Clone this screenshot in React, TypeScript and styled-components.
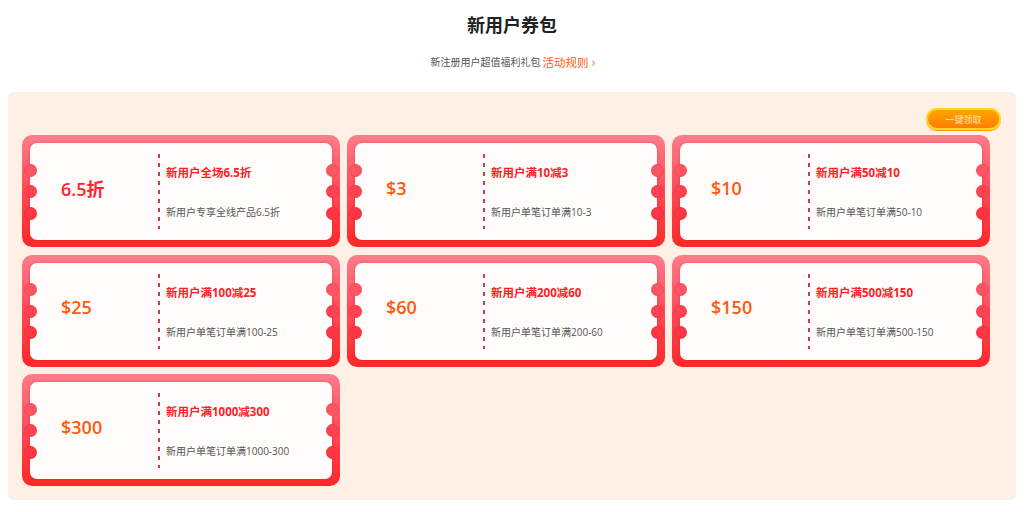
import React from "react";
import styled, { createGlobalStyle } from "styled-components";

const coupons = [
  { value: "6.5折", discount: true, title: "新用户全场6.5折", desc: "新用户专享全线产品6.5折" },
  { value: "$3", title: "新用户满10减3", desc: "新用户单笔订单满10-3" },
  { value: "$10", title: "新用户满50减10", desc: "新用户单笔订单满50-10" },
  { value: "$25", title: "新用户满100减25", desc: "新用户单笔订单满100-25" },
  { value: "$60", title: "新用户满200减60", desc: "新用户单笔订单满200-60" },
  { value: "$150", title: "新用户满500减150", desc: "新用户单笔订单满500-150" },
  { value: "$300", title: "新用户满1000减300", desc: "新用户单笔订单满1000-300" },
];

const notches = [
  { top: 27, color: "#ff5565" },
  { top: 48.5, color: "#ff4352" },
  { top: 70, color: "#ff3644" },
];

export default function App() {
  return (
    <>
      <GlobalStyle />
      <Page>
        <Header>
          <Heading>新用户券包</Heading>
          <Sub>
            新注册用户超值福利礼包
            <Rules>
              活动规则<Arrow>›</Arrow>
            </Rules>
          </Sub>
        </Header>
        <Panel>
          <Toolbar>
            <ClaimButton>一键领取</ClaimButton>
          </Toolbar>
          <Grid>
            {coupons.map((c) => (
              <Ticket key={c.title}>
                <Inner>
                  {notches.map((n, i) => (
                    <React.Fragment key={i}>
                      <Notch $side="left" $color={n.color} style={{ top: n.top }} />
                      <Notch $side="right" $color={n.color} style={{ top: n.top }} />
                    </React.Fragment>
                  ))}
                  <Value $discount={!!c.discount}>{c.value}</Value>
                  <Divider />
                  <Info>
                    <Title>{c.title}</Title>
                    <Desc>{c.desc}</Desc>
                  </Info>
                </Inner>
              </Ticket>
            ))}
          </Grid>
        </Panel>
      </Page>
    </>
  );
}

const GlobalStyle = createGlobalStyle`
  body {
    margin: 0;
    background: #ffffff;
    font-family: "Open Sans", "Noto Sans CJK SC", sans-serif;
  }
`;

const Page = styled.div`
  width: 1034px;
  padding: 0 18px 0 8px;
  box-sizing: border-box;
`;

const Header = styled.div`
  display: flex;
  flex-direction: column;
  align-items: center;
  padding-top: 11px;
  height: 92px;
  box-sizing: border-box;
`;

const Heading = styled.div`
  color: #222;
  font-family: "Noto Sans CJK SC", sans-serif;
  font-size: 18px;
  font-weight: 700;
  line-height: 26px;
`;

const Sub = styled.div`
  margin-top: 18px;
  color: #555;
  font-family: "Noto Sans CJK SC", sans-serif;
  font-size: 10px;
  line-height: 14px;
  display: flex;
  align-items: center;
  padding-left: 2px;
`;

const Rules = styled.span`
  color: #ff5a0a;
  font-size: 11.5px;
  margin-left: 2px;
  display: flex;
  align-items: center;
`;

const Arrow = styled.span`
  font-size: 13px;
  margin-left: 3px;
  color: #ff6a1a;
`;

const Panel = styled.div`
  background: #fef0e4;
  border-radius: 5px;
  padding: 16px 26px 13px 14px;
  height: 408px;
  box-sizing: border-box;
`;

const Toolbar = styled.div`
  display: flex;
  justify-content: flex-end;
  margin-right: -11px;
  margin-bottom: 5px;
`;

const ClaimButton = styled.div`
  width: 75px;
  height: 22px;
  box-sizing: border-box;
  border-radius: 11px;
  border: 2px solid #ffd426;
  box-shadow: 0 1px 0 #ff9a00;
  background: linear-gradient(#ffa600, #ff7c00);
  color: #ffe3b8;
  font-family: "Noto Sans CJK SC", sans-serif;
  font-size: 9px;
  display: flex;
  align-items: center;
  justify-content: center;
`;

const Grid = styled.div`
  display: grid;
  grid-template-columns: repeat(3, 318px);
  grid-auto-rows: 112px;
  column-gap: 7px;
  row-gap: 7.5px;
`;

const Ticket = styled.div`
  border-radius: 10px;
  padding: 8px 8px 7px;
  background: linear-gradient(#ff7d8b, #ff4a57 50%, #ff2828);
  box-sizing: border-box;
`;

const Inner = styled.div`
  position: relative;
  height: 100%;
  background: #fffcfb;
  border-radius: 7px;
  box-shadow: 0 0 3px rgba(170, 20, 40, 0.35);
  display: flex;
  align-items: stretch;
`;

const Notch = styled.div<{ $side: "left" | "right"; $color: string }>`
  position: absolute;
  width: 13px;
  height: 13px;
  margin-top: -6.5px;
  border-radius: 50%;
  background: ${(p) => p.$color};
  ${(p) => (p.$side === "left" ? "left: -6.5px;" : "right: -6.5px;")}
  box-shadow: inset 0 0 2px rgba(150, 0, 20, 0.3);
`;

const Value = styled.div<{ $discount: boolean }>`
  width: 128px;
  padding-left: 31px;
  padding-bottom: 8px;
  box-sizing: border-box;
  display: flex;
  align-items: center;
  color: ${(p) => (p.$discount ? "#ff2530" : "#ff5a0a")};
  font-family: "Open Sans", "Noto Sans CJK SC", sans-serif;
  font-size: 18px;
  font-weight: 600;
`;

const Divider = styled.div`
  width: 2px;
  margin: 11px 0;
  background: repeating-linear-gradient(#c0404f 0 4px, transparent 4px 9px);
`;

const Info = styled.div`
  display: flex;
  flex-direction: column;
  padding: 22px 0 0 6px;
  font-family: "Open Sans", "Noto Sans CJK SC", sans-serif;
`;

const Title = styled.div`
  color: #ff2026;
  font-size: 11.5px;
  font-weight: 700;
  line-height: 16px;
`;

const Desc = styled.div`
  margin-top: 23px;
  color: #555;
  font-size: 10px;
  line-height: 16px;
`;
